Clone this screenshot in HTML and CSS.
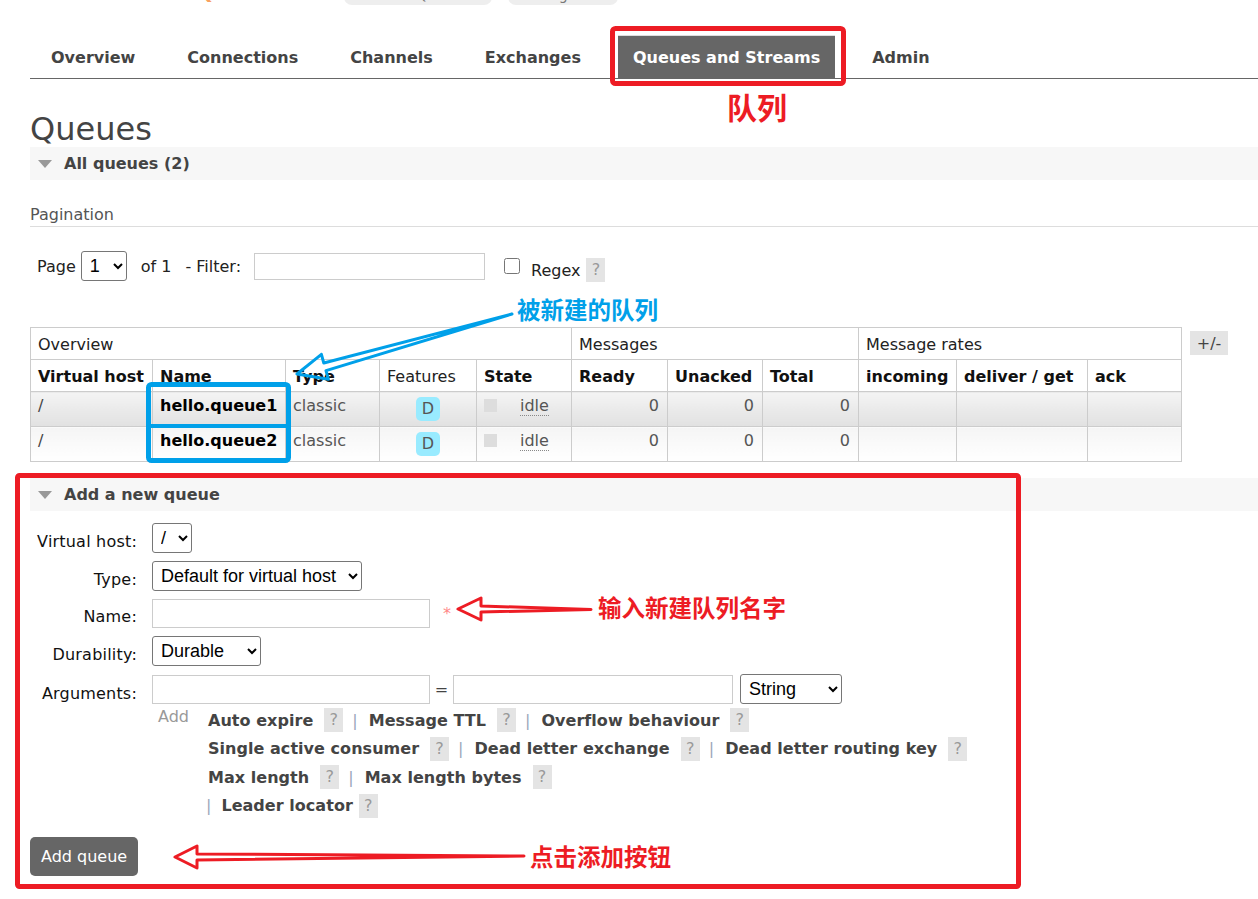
FILE: index.html
```html
<!DOCTYPE html>
<html lang="en">
<head>
<meta charset="utf-8">
<title>RabbitMQ Management - Queues</title>
<link rel="stylesheet" href="styles.css">
</head>
<body>
<div class="page">
  <header class="topbar">
    <div class="topbar-inner">
      <span class="logo">RabbitMQ</span>
      <span class="badge b1">RabbitMQ 3.12.4</span>
      <span class="badge b2">Erlang 26.0</span>
    </div>
  </header>

  <ul class="tabs">
    <li>Overview</li>
    <li>Connections</li>
    <li>Channels</li>
    <li>Exchanges</li>
    <li class="active">Queues and Streams</li>
    <li>Admin</li>
  </ul>

  <h1 class="title">Queues</h1>

  <section class="section">
    <h2 class="sec-head"><span class="tri"></span>All queues (2)</h2>
    <h3 class="pag-title">Pagination</h3>
    <div class="pag-row">
      <span>Page</span>
      <select class="sel sel-page"><option>1</option></select>
      <span class="of">of 1</span>
      <span class="flt">- Filter:</span>
      <input class="txt txt-filter" type="text">
      <input class="chk" type="checkbox">
      <span class="regex">Regex</span>
      <span class="help help-regex">?</span>
    </div>

    <div class="table-wrap">
      <table class="qtable">
        <colgroup>
          <col style="width:122px"><col style="width:133px"><col style="width:94px"><col style="width:97px"><col style="width:95px">
          <col style="width:96px"><col style="width:95px"><col style="width:96px">
          <col style="width:98px"><col style="width:131px"><col style="width:94px">
        </colgroup>
        <thead>
          <tr class="grp">
            <th colspan="5">Overview</th>
            <th colspan="3">Messages</th>
            <th colspan="3">Message rates</th>
          </tr>
          <tr class="cols">
            <th>Virtual host</th>
            <th>Name</th>
            <th>Type</th>
            <th class="plain">Features</th>
            <th>State</th>
            <th>Ready</th>
            <th>Unacked</th>
            <th>Total</th>
            <th>incoming</th>
            <th>deliver / get</th>
            <th>ack</th>
          </tr>
        </thead>
        <tbody>
          <tr class="r1">
            <td class="vh">/</td>
            <td class="nm">hello.queue1</td>
            <td class="ty">classic</td>
            <td class="ft"><span class="feat">D</span></td>
            <td class="st"><span class="sq"></span><span class="idle">idle</span></td>
            <td class="num">0</td>
            <td class="num">0</td>
            <td class="num">0</td>
            <td></td><td></td><td></td>
          </tr>
          <tr class="r2">
            <td class="vh">/</td>
            <td class="nm">hello.queue2</td>
            <td class="ty">classic</td>
            <td class="ft"><span class="feat">D</span></td>
            <td class="st"><span class="sq"></span><span class="idle">idle</span></td>
            <td class="num">0</td>
            <td class="num">0</td>
            <td class="num">0</td>
            <td></td><td></td><td></td>
          </tr>
        </tbody>
      </table>
      <span class="pm">+/-</span>
    </div>
  </section>

  <section class="section add">
    <h2 class="sec-head"><span class="tri"></span>Add a new queue</h2>
    <div class="qform">
      <label class="lbl">Virtual host:</label>
      <div><select class="sel sel-vh"><option>/</option></select></div>

      <label class="lbl">Type:</label>
      <div><select class="sel sel-type"><option>Default for virtual host</option></select></div>

      <label class="lbl">Name:</label>
      <div class="ctl-row"><input class="txt txt-name" type="text"><span class="req">*</span></div>

      <label class="lbl">Durability:</label>
      <div><select class="sel sel-dur"><option>Durable</option></select></div>

      <label class="lbl lbl-args">Arguments:</label>
      <div class="ctl-row">
        <input class="txt txt-key" type="text">
        <span class="eq">=</span>
        <input class="txt txt-val" type="text">
        <select class="sel sel-str"><option>String</option></select>
      </div>

      <div class="args-links">
        <span class="add-lbl">Add</span>
        <div class="link-lines">
          <div class="line">
            <span class="arg">Auto expire</span><span class="help">?</span><span class="sep">|</span>
            <span class="arg">Message TTL</span><span class="help">?</span><span class="sep">|</span>
            <span class="arg">Overflow behaviour</span><span class="help">?</span>
          </div>
          <div class="line">
            <span class="arg">Single active consumer</span><span class="help">?</span><span class="sep">|</span>
            <span class="arg">Dead letter exchange</span><span class="help">?</span><span class="sep">|</span>
            <span class="arg">Dead letter routing key</span><span class="help">?</span>
          </div>
          <div class="line">
            <span class="arg">Max length</span><span class="help">?</span><span class="sep">|</span>
            <span class="arg">Max length bytes</span><span class="help">?</span>
          </div>
          <div class="line line-last">
            <span class="sep sep-first">|</span>
            <span class="arg">Leader locator</span><span class="help help-tight">?</span>
          </div>
        </div>
      </div>
    </div>
    <button class="btn" type="button">Add queue</button>
  </section>

  <div class="annot">
    <svg class="annot-svg" width="1258" height="899" viewBox="0 0 1258 899">
      <rect x="612.5" y="28.5" width="231" height="55" rx="3" fill="none" stroke="#ed1c24" stroke-width="5"/>
      <rect x="17.5" y="475.5" width="1001" height="411" rx="2" fill="none" stroke="#ed1c24" stroke-width="5"/>
      <rect x="148.5" y="384.5" width="140" height="76" rx="3" fill="none" stroke="#00a0e9" stroke-width="5"/>
      <line x1="147" y1="426" x2="290" y2="426" stroke="#00a0e9" stroke-width="4"/>
      <polygon points="297,374 328.4,379.3 326,370.6 512,314 323.8,363 321.4,354.3" fill="none" stroke="#00a0e9" stroke-width="3" stroke-linejoin="round"/>
      <polygon points="458,609 481,598 481,606 591,609.5 481,612 481,620" fill="none" stroke="#ed1c24" stroke-width="3" stroke-linejoin="round"/>
      <polygon points="175,857 197,846 197,854 524,856 197,860 197,868" fill="none" stroke="#ed1c24" stroke-width="3" stroke-linejoin="round"/>
    </svg>
    <span class="note note-tab">队列</span>
    <span class="note note-new">被新建的队列</span>
    <span class="note note-name">输入新建队列名字</span>
    <span class="note note-btn">点击添加按钮</span>
  </div>
</div>
</body>
</html>
```

FILE: styles.css
```css
* { box-sizing: border-box; }

html, body {
  margin: 0;
  padding: 0;
  background: #fff;
}

body {
  width: 1258px;
  height: 899px;
  overflow: hidden;
  font-family: "DejaVu Sans", Verdana, sans-serif;
  font-size: 16px;
  color: #222;
}

.page {
  position: relative;
  padding-left: 30px;
  height: 899px;
}

/* top header (mostly scrolled off) */
.topbar {
  height: 6px;
  overflow: hidden;
}

.topbar-inner {
  display: flex;
  align-items: flex-start;
  height: 26px;
  margin-top: -21px;
}

.logo {
  width: 314px;
  padding-left: 62px;
  color: #f8a060;
  font-size: 22px;
  font-weight: bold;
  line-height: 22px;
  margin-top: 2px;
}

.badge {
  height: 26px;
  border-radius: 8px;
  background: #eee;
  color: #777;
  font-size: 14px;
  line-height: 18px;
  padding-top: 7px;
  text-align: center;
}

.b1 { width: 148px; margin-right: 16px; }
.b2 { width: 110px; }

/* tabs */
.tabs {
  display: flex;
  list-style: none;
  margin: 29px 0 0;
  padding: 0 0 0 6px;
  border-bottom: 1px solid #666;
}

.tabs li {
  height: 43px;
  line-height: 40px;
  padding: 3px 15px 0;
  margin-right: 22px;
  font-weight: bold;
  color: #444;
}

.tabs li.active {
  background: #666;
  color: #fff;
  border-top: 1px solid #ddd;
  padding-top: 2px;
}

/* title */
.title {
  margin: 32px 0 0;
  font-size: 32px;
  line-height: 36px;
  font-weight: normal;
  color: #444;
}

.sec-head {
  margin: 0;
  height: 33px;
  background: #f7f7f7;
  display: flex;
  align-items: center;
  padding-left: 8px;
  font-size: 16px;
  font-weight: bold;
  color: #444;
}

.tri {
  width: 0;
  height: 0;
  border-left: 7px solid transparent;
  border-right: 7px solid transparent;
  border-top: 8px solid #999;
  margin-right: 12px;
}

.pag-title {
  margin: 25px 0 0;
  font-size: 16px;
  font-weight: normal;
  line-height: 19px;
  color: #555;
  padding-bottom: 2px;
  border-bottom: 1px solid #ddd;
}

.pag-row {
  display: flex;
  align-items: center;
  height: 30px;
  margin-top: 24px;
  padding-left: 7px;
  color: #222;
}

.sel {
  font-family: "Liberation Sans", Arial, sans-serif;
  font-size: 18px;
  height: 30px;
  border: 1px solid #767676;
  border-radius: 3px;
  background: #fff;
  color: #000;
  padding: 0 2px 0 4px;
}

.txt {
  font-family: "Liberation Sans", Arial, sans-serif;
  font-size: 16px;
  border: 1px solid #ccc;
  border-radius: 0;
  background: #fff;
  padding: 0 4px;
  margin: 0;
}

.sel-page { width: 46px; margin-left: 5px; }
.of { margin-left: 14px; }
.flt { margin-left: 14px; }
.txt-filter { width: 231px; height: 27px; margin-left: 13px; }
.chk { width: 16px; height: 16px; margin: 0 0 0 19px; }
.regex { margin-left: 11px; position: relative; top: 4px; }

.help {
  display: inline-block;
  width: 19px;
  height: 24px;
  line-height: 24px;
  background: #e4e4e4;
  color: #999;
  text-align: center;
  font-weight: normal;
  margin-left: 11px;
}

.help-regex { margin-left: 6px; position: relative; top: 4px; }

/* table */
.table-wrap {
  display: flex;
  align-items: flex-start;
  margin-top: 46px;
}

.qtable {
  border-collapse: collapse;
  table-layout: fixed;
  width: 1151px;
}

.qtable th,
.qtable td {
  border: 1px solid #ccc;
  padding: 0 7px;
  text-align: left;
  font-size: 16px;
  white-space: nowrap;
  overflow: hidden;
}

.qtable thead tr { height: 32px; }
.qtable th { font-weight: bold; color: #111; padding-top: 1px; }
.qtable .grp th { font-weight: normal; color: #222; }
.qtable th.plain { font-weight: normal; color: #222; }

.qtable tbody tr { height: 35px; }
.qtable td { vertical-align: top; padding-top: 4px; color: #555; }

.qtable tr.r1 td { background: linear-gradient(#f4f4f4, #e1e1e1); }
.qtable tr.r2 td { background: linear-gradient(#f5f5f5, #ffffff); }

.qtable td.vh { color: #444; }
.qtable td.nm { color: #000; font-weight: bold; }
.qtable td.ft { text-align: center; }
.qtable td.num { text-align: right; padding-right: 8px; }

.feat {
  display: inline-block;
  width: 24px;
  height: 24px;
  line-height: 24px;
  margin-top: 1px;
  border-radius: 5px;
  background: #99ebff;
  color: #555;
  text-align: center;
}

.sq {
  display: inline-block;
  width: 13px;
  height: 13px;
  background: #ddd;
  margin-right: 23px;
  vertical-align: -1px;
}

.idle {
  color: #555;
  border-bottom: 1px dotted #888;
}

.pm {
  margin: 4px 0 0 8px;
  width: 38px;
  height: 24px;
  background: #e4e4e4;
  color: #444;
  display: flex;
  align-items: center;
  justify-content: center;
}

/* add queue */
.add { margin-top: 16px; }

.qform {
  display: grid;
  grid-template-columns: 110px auto;
  column-gap: 12px;
  row-gap: 8px;
  align-items: center;
  margin-top: 12px;
}

.lbl {
  text-align: right;
  color: #111;
  letter-spacing: 0.2px;
  padding-right: 3px;
  position: relative;
  top: 3px;
}

.lbl-args { top: 4px; }

.ctl-row {
  display: flex;
  align-items: center;
}

.sel-vh { width: 40px; }
.sel-type { width: 210px; }
.sel-dur { width: 109px; }
.sel-str { width: 102px; margin-left: 7px; }

.txt-name { width: 278px; height: 29px; }
.req { color: #f88; margin-left: 13px; }

.txt-key { width: 278px; height: 29px; }
.eq { width: 23px; text-align: center; color: #444; }
.txt-val { width: 280px; height: 29px; }

.args-links {
  grid-column: 2;
  display: flex;
  align-items: flex-start;
  margin-top: -6px;
}

.add-lbl {
  width: 56px;
  padding-left: 6px;
  line-height: 22px;
  color: #999;
}

.line {
  display: flex;
  align-items: center;
  height: 28.5px;
}

.arg {
  font-weight: bold;
  color: #444;
  letter-spacing: 0.04px;
}

.sep {
  color: #9aa6ba;
  margin: 0 11px 0 9px;
}

.sep-first { margin: 0 10px 0 -2px; }
.help-tight { margin-left: 6px; }

.btn {
  display: block;
  margin-top: 17px;
  height: 39px;
  padding: 0 11px;
  border: none;
  border-radius: 5px;
  background: #666;
  color: #fff;
  font-family: "DejaVu Sans", Verdana, sans-serif;
  font-size: 16px;
}

/* annotations overlay */
.annot {
  position: absolute;
  left: 0;
  top: 0;
  width: 1258px;
  height: 899px;
  pointer-events: none;
}

.annot-svg {
  position: absolute;
  left: 0;
  top: 0;
}

.note {
  position: absolute;
  font-family: "Noto Sans CJK SC", sans-serif;
  font-weight: bold;
  line-height: 1;
  white-space: nowrap;
}

.note-tab { left: 727px; top: 91px; font-size: 30px; color: #ed1c24; }
.note-new { left: 517px; top: 298px; font-size: 23.5px; color: #00a0e9; }
.note-name { left: 598px; top: 596px; font-size: 23.5px; color: #ed1c24; }
.note-btn { left: 530px; top: 845px; font-size: 23.5px; color: #ed1c24; }
```
